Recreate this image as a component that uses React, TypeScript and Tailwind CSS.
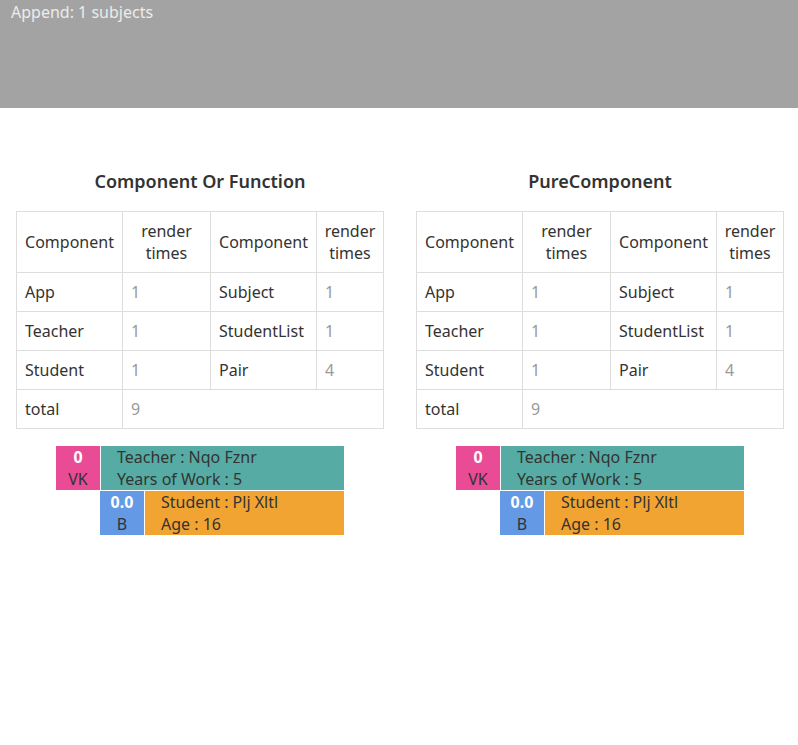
import React from 'react';

type Row = [string, number, string, number];

const rows: Row[] = [
  ['App', 1, 'Subject', 1],
  ['Teacher', 1, 'StudentList', 1],
  ['Student', 1, 'Pair', 4],
];

const td = 'border border-[#dddddd] px-2 h-[39px] text-left';

const RenderTable = ({ title }: { title: string }) => (
  <div className="flex-1 px-4">
    <h3 className="text-center text-[18px] font-semibold text-[#333] leading-[26px] mt-[60px] mb-[17px]">{title}</h3>
    <table className="w-full border-collapse text-[16px] text-[#333] table-fixed leading-[22px]">
      <colgroup>
        <col className="w-[106px]" />
        <col className="w-[88px]" />
        <col className="w-[106px]" />
        <col className="w-[67px]" />
      </colgroup>
      <thead>
        <tr className="h-[61px]">
          <th className="border border-[#dddddd] px-1 font-normal">Component</th>
          <th className="border border-[#dddddd] px-1 font-normal">render<br />times</th>
          <th className="border border-[#dddddd] px-1 font-normal">Component</th>
          <th className="border border-[#dddddd] px-1 font-normal">render<br />times</th>
        </tr>
      </thead>
      <tbody>
        {rows.map((r) => (
          <tr key={r[0]}>
            <td className={td}>{r[0]}</td>
            <td className={`${td} text-[#999]`}>{r[1]}</td>
            <td className={`${td} whitespace-nowrap`}>{r[2]}</td>
            <td className={`${td} text-[#999]`}>{r[3]}</td>
          </tr>
        ))}
        <tr>
          <td className={td}>total</td>
          <td className={`${td} text-[#999]`} colSpan={3}>9</td>
        </tr>
      </tbody>
    </table>

    <div className="mt-[17px] ml-10 w-[288px] flex flex-col gap-px text-[16px] leading-[22px] text-[#333]">
      <div className="flex gap-px h-[44px]">
        <div className="w-[44px] bg-[#e94b95] flex flex-col items-center">
          <span className="font-bold text-white">0</span>
          <span>VK</span>
        </div>
        <div className="flex-1 bg-[#56aca4] pl-4 flex flex-col">
          <span>Teacher : Nqo Fznr</span>
          <span>Years of Work : 5</span>
        </div>
      </div>
      <div className="flex gap-px h-[44px] ml-[44px]">
        <div className="w-[44px] bg-[#6499e6] flex flex-col items-center">
          <span className="font-bold text-white">0.0</span>
          <span>B</span>
        </div>
        <div className="flex-1 bg-[#f2a433] pl-4 flex flex-col">
          <span>Student : Plj Xltl</span>
          <span>Age : 16</span>
        </div>
      </div>
    </div>
  </div>
);

export default function App() {
  return (
    <div className="min-h-[745px] bg-white" style={{ fontFamily: '"Noto Sans", "Liberation Sans", Arial, sans-serif' }}>
      <div className="h-[108px] bg-[#a3a3a3] px-[11px]">
        <span className="text-[16px] text-[#ececec] leading-[20px]">Append: 1 subjects</span>
      </div>
      <div className="flex">
        <RenderTable title="Component Or Function" />
        <RenderTable title="PureComponent" />
      </div>
    </div>
  );
}
